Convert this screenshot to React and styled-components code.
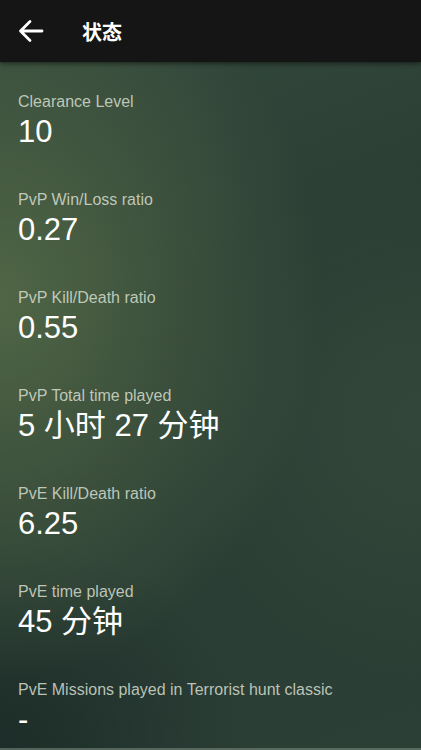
import React from 'react';
import styled, { createGlobalStyle } from 'styled-components';

const GlobalStyle = createGlobalStyle`
  html, body {
    margin: 0;
    padding: 0;
    background: #1e2d2a;
  }
  body {
    font-family: "Liberation Sans", "Noto Sans CJK SC", sans-serif;
  }
`;

const Screen = styled.div`
  width: 421px;
  height: 750px;
  display: flex;
  flex-direction: column;
  overflow: hidden;
  background:
    radial-gradient(ellipse 320px 380px at 0px 300px, rgba(82, 104, 70, 0.95), rgba(82, 104, 70, 0) 100%),
    radial-gradient(ellipse 260px 260px at 421px 420px, rgba(52, 72, 58, 0.9), rgba(52, 72, 58, 0) 100%),
    radial-gradient(ellipse 260px 200px at 0px 740px, rgba(28, 44, 40, 0.95), rgba(28, 44, 40, 0) 100%),
    linear-gradient(160deg, #34493c 0%, #2a3d34 45%, #2c3f36 100%);
`;

const Header = styled.header`
  height: 62px;
  flex-shrink: 0;
  background: #151515;
  display: flex;
  align-items: center;
  padding-left: 18px;
  box-shadow: 0 2px 4px rgba(0, 0, 0, 0.45);
  position: relative;
  z-index: 1;
`;

const BackButton = styled.button`
  background: none;
  border: none;
  padding: 0;
  width: 26px;
  height: 26px;
  display: flex;
  align-items: center;
  justify-content: center;
  margin-right: 38px;
`;

const Title = styled.h1`
  margin: 0;
  color: #ffffff;
  font-size: 20px;
  font-weight: 700;
  font-family: "Noto Sans CJK SC", sans-serif;
`;

const List = styled.div`
  display: flex;
  flex-direction: column;
  gap: 40px;
  padding: 30px 18px 0;
`;

const Stat = styled.div`
  display: flex;
  flex-direction: column;
  gap: 2px;
`;

const Label = styled.div`
  font-size: 16px;
  line-height: 19px;
  color: rgba(214, 222, 208, 0.85);
`;

const Value = styled.div`
  font-size: 31px;
  line-height: 37px;
  color: #ffffff;
`;

const BottomLine = styled.div`
  margin-top: auto;
  height: 2px;
  background: rgba(120, 135, 125, 0.6);
`;

const stats = [
  { label: 'Clearance Level', value: '10' },
  { label: 'PvP Win/Loss ratio', value: '0.27' },
  { label: 'PvP Kill/Death ratio', value: '0.55' },
  { label: 'PvP Total time played', value: '5 小时 27 分钟' },
  { label: 'PvE Kill/Death ratio', value: '6.25' },
  { label: 'PvE time played', value: '45 分钟' },
  { label: 'PvE Missions played in Terrorist hunt classic', value: '-' },
];

const App = () => (
  <>
    <GlobalStyle />
    <Screen>
      <Header>
        <BackButton aria-label="back">
          <svg width="26" height="24" viewBox="0 0 26 24" fill="none">
            <path d="M24 12H3M12 2.5L2.5 12l9.5 9.5" stroke="#fff" strokeWidth="2.8" strokeLinecap="round" strokeLinejoin="round" />
          </svg>
        </BackButton>
        <Title>状态</Title>
      </Header>
      <List>
        {stats.map((s) => (
          <Stat key={s.label}>
            <Label>{s.label}</Label>
            <Value>{s.value}</Value>
          </Stat>
        ))}
      </List>
      <BottomLine />
    </Screen>
  </>
);

export default App;
